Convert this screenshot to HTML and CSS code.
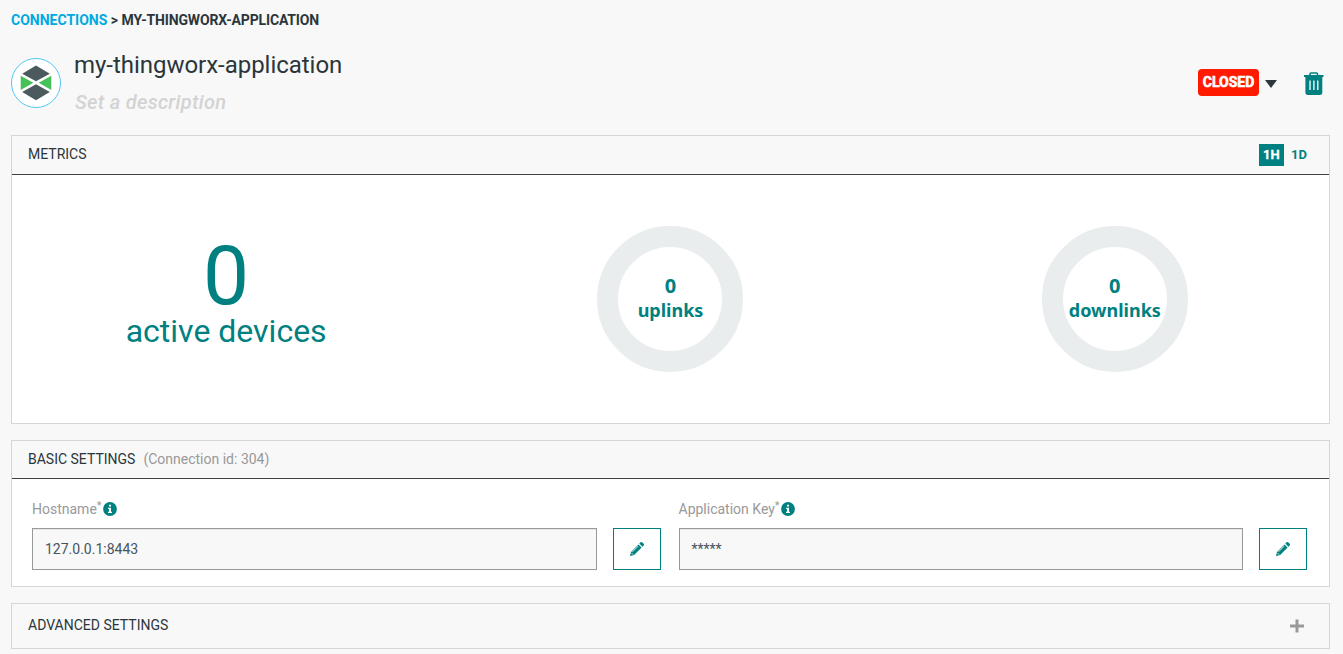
FILE: index.html
```html
<!DOCTYPE html>
<html lang="en">
<head>
<meta charset="utf-8">
<title>my-thingworx-application</title>
<link rel="stylesheet" href="styles.css">
</head>
<body>
<nav class="breadcrumb"><a class="crumb-link">CONNECTIONS</a> &gt; <span class="crumb-current">MY-THINGWORX-APPLICATION</span></nav>
<header class="header">
  <svg class="logo" width="50" height="50" viewBox="0 0 50 50">
    <circle cx="25" cy="25" r="24.500" fill="#fff" stroke="#4fc8f4"/>
    <path d="M25 7.500 38.800 15.800 25 23.300 11.200 15.800ZM25 42.200 38.800 34 25 26.300 11.200 34Z" fill="#4b5a5c"/>
    <path d="M9.700 17.800 22.300 24.800 9.700 32ZM40.300 17.800 27.700 24.800 40.300 32Z" fill="#45c157"/>
  </svg>
  <div class="heading">
    <h1 class="title">my-thingworx-application</h1>
    <p class="description">Set a description</p>
  </div>
  <div class="actions">
    <span class="status">CLOSED</span>
    <svg class="caret" width="12" height="8" viewBox="0 0 12 8"><path d="M0 0H12L6 8Z" fill="#2e373c"/></svg>
    <svg class="trash" width="20" height="24" viewBox="0 0 20 24">
      <path d="M6 3.500V2Q6 1 7 1H12.500Q13.500 1 13.500 2V3.500" fill="none" stroke="#008080" stroke-width="1.600"/>
      <path d="M0 3H19.500V5H18.300V20.500Q18.300 23 15.500 23H4.200Q1.400 23 1.400 20.500V5H0Z" fill="#008080"/>
      <path d="M6 8.500V18M9.900 8.500V18M13.800 8.500V18" stroke="#fff" stroke-width="1.300"/>
    </svg>
  </div>
</header>
<main class="panels">
  <section class="panel metrics">
    <div class="panel-head"><h2 class="panel-title">METRICS</h2>
      <div class="range"><span class="range-item active">1H</span><span class="range-item">1D</span></div>
    </div>
    <div class="metric-row">
      <div class="metric devices"><div class="big">0</div><div class="big-label">active devices</div></div>
      <div class="metric"><div class="ring"><span class="ring-value">0</span><span>uplinks</span></div></div>
      <div class="metric"><div class="ring"><span class="ring-value">0</span><span>downlinks</span></div></div>
    </div>
  </section>
  <section class="panel basic">
    <div class="panel-head"><h2 class="panel-title">BASIC SETTINGS</h2><span class="panel-note">(Connection id: 304)</span></div>
    <div class="fields">
      <div class="field">
        <div class="label"><span>Hostname</span><span class="star">*</span>
          <svg class="info" width="14" height="14" viewBox="0 0 14 14"><circle cx="7" cy="7" r="6.900" fill="#008080"/><path d="M6 2.700H8V4.500H6ZM5.100 5.700H8V9.800H9V11H5V9.800H6V6.900H5.100Z" fill="#fff"/></svg></div>
        <div class="control"><div class="input">127.0.0.1:8443</div>
          <div class="edit"><svg width="16" height="16" viewBox="0 0 16 16"><path d="M1 15 2 10.900 9.500 3.400 12.600 6.500 5.100 14ZM10.300 2.600 11.600 1.300Q12.500.6 13.400 1.400L14.700 2.700Q15.400 3.600 14.700 4.400L13.400 5.700Z" fill="#008080"/><path d="M3.500 10.800 9.200 5.100M2.500 12 4.100 13.600" stroke="#fff" stroke-width=".8"/></svg></div></div>
      </div>
      <div class="field">
        <div class="label"><span>Application Key</span><span class="star">*</span>
          <svg class="info" width="14" height="14" viewBox="0 0 14 14"><circle cx="7" cy="7" r="6.900" fill="#008080"/><path d="M6 2.700H8V4.500H6ZM5.100 5.700H8V9.800H9V11H5V9.800H6V6.900H5.100Z" fill="#fff"/></svg></div>
        <div class="control"><div class="input">*****</div>
          <div class="edit"><svg width="16" height="16" viewBox="0 0 16 16"><path d="M1 15 2 10.900 9.500 3.400 12.600 6.500 5.100 14ZM10.300 2.600 11.600 1.300Q12.500.6 13.400 1.400L14.700 2.700Q15.400 3.600 14.700 4.400L13.400 5.700Z" fill="#008080"/><path d="M3.500 10.800 9.200 5.100M2.500 12 4.100 13.600" stroke="#fff" stroke-width=".8"/></svg></div></div>
      </div>
    </div>
  </section>
  <section class="panel advanced">
    <h2 class="panel-title">ADVANCED SETTINGS</h2>
    <svg width="14" height="14" viewBox="0 0 14 14"><path d="M7 .5V13.500M0 7H14" stroke="#999" stroke-width="3"/></svg>
  </section>
</main>
</body>
</html>
```
FILE: styles.css
```css
* { box-sizing: border-box; }
body { margin: 0; padding: 10px 13px 0 11px; height: 654px; overflow: hidden; background: #f8f8f8; color: #2b363b; font-family: Roboto, sans-serif; font-size: 14px; }
h1, h2, p { margin: 0; font-weight: 400; }
.breadcrumb { height: 20px; line-height: 20px; font-weight: 700; white-space: nowrap; }
.crumb-link { color: #00a9e0; }
.crumb-current { letter-spacing: -.15px; }
.header { display: flex; height: 105px; padding-top: 20px; }
.logo { flex: none; margin-top: 8px; }
.heading { padding: 0 0 0 13px; }
.title { font-size: 24px; line-height: 30px; letter-spacing: -.03px; white-space: nowrap; }
.description { margin: 9px 0 0 1px; font-size: 20px; line-height: 26px; font-style: italic; font-weight: 500; letter-spacing: .3px; color: #d3d3d3; white-space: nowrap; }
.actions { display: flex; align-items: flex-start; margin: 19px 6px 0 auto; }
.status { width: 61px; height: 27px; border-radius: 4px; background: #ff1a00; color: #fff; font-weight: 700; -webkit-text-stroke: .6px #fff; line-height: 27px; text-align: center; }
.caret { margin: 11px 27px 0 6px; }
.trash { margin-top: 3px; }
.panels { display: flex; flex-direction: column; gap: 16px; }
.panel { border: 1px solid #d6d6d6; background: #fff; }
.metrics { height: 289px; }
.basic { height: 147px; }
.advanced { display: flex; justify-content: space-between; align-items: center; height: 46px; padding: 0 25px 2px 16px; background: #f8f8f8; }
.advanced svg { margin-top: 2px; }
.panel-head { display: flex; align-items: center; height: 39px; padding: 0 16px 2px; border-bottom: 1px solid #3e4245; background: #f8f8f8; }
.basic .panel-head { height: 38px; }
.panel-title { font-size: 14px; line-height: 20px; }
.panel-note { margin-left: 8px; color: #999; }
.range { display: flex; gap: 1px; margin: 1px 0 0 auto; }
.range-item { width: 25px; height: 22px; padding-left: 4px; line-height: 22px; font-size: 13px; font-weight: 700; color: #008080; }
.range-item + .range-item { width: 28px; padding-left: 6px; }
.range-item.active { background: #008080; color: #fff; -webkit-text-stroke: .3px #fff; }
.metric-row { display: grid; grid-template-columns: repeat(3, 1fr); margin: 0 -8px; height: 248px; align-items: center; color: #008080; }
.metric { display: flex; justify-content: center; }
.devices { flex-direction: column; align-items: center; padding-bottom: 9px; }
.big { height: 74px; font-size: 82px; line-height: 75px; }
.big-label { font-size: 32px; line-height: 37px; white-space: nowrap; }
.ring { display: flex; flex-direction: column; align-items: center; justify-content: center; width: 146px; height: 146px; padding-bottom: 2px; border: 21px solid #e9edee; border-radius: 50%; font: 700 18px/25px "Noto Sans", sans-serif; }
.ring-value { font-size: 20px; }
.fields { display: grid; grid-template-columns: 1fr 1fr; gap: 18px; padding: 20px 22px 0 20px; }
.label { display: flex; height: 20px; color: #999; line-height: 20px; }
.star { font-size: 11px; line-height: 14px; }
.info { margin: 3px 0 0 1px; }
.control { display: flex; gap: 16px; margin-top: 9px; }
.input { flex: 1; height: 42px; padding-left: 12px; border: 1px solid #999; background: #f8f8f8; box-shadow: inset 0 1px 1px #00000013; color: #455560; line-height: 40px; }
.edit { display: flex; align-items: center; justify-content: center; width: 48px; height: 42px; border: 1px solid #008080; background: #fff; }
```
